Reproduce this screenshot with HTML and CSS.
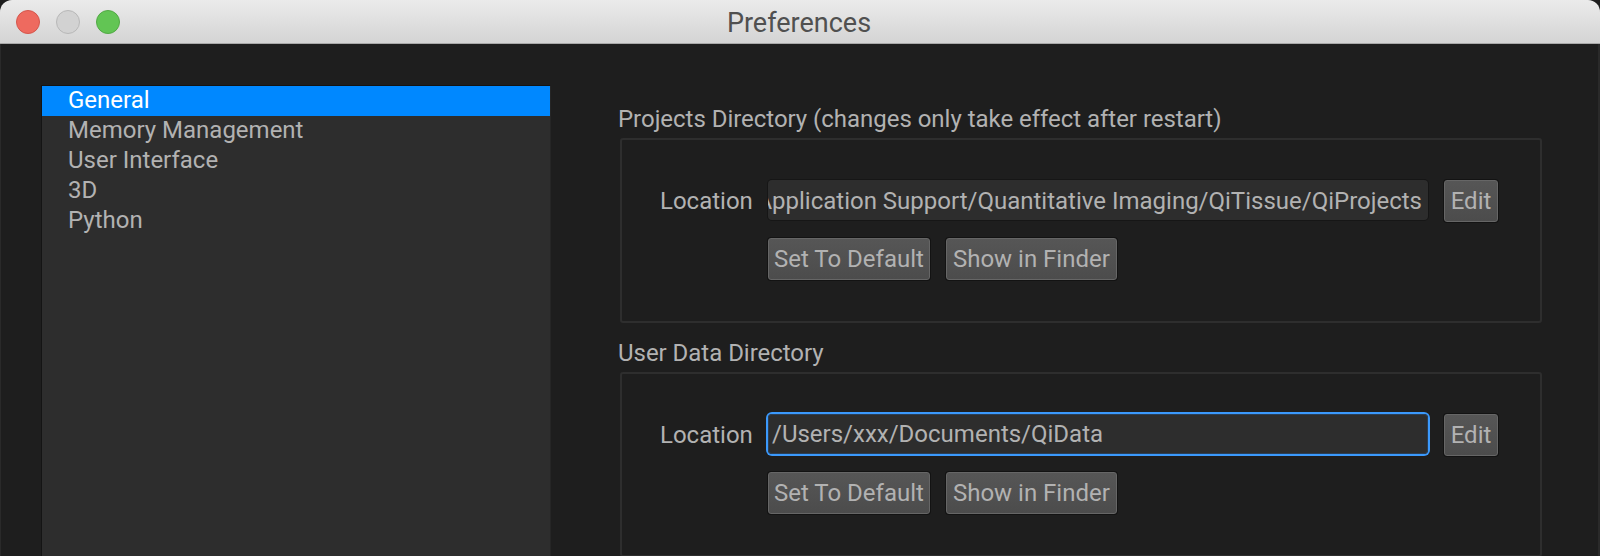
FILE: index.html
```html
<!DOCTYPE html>
<html lang="en">
<head>
<meta charset="utf-8">
<title>Preferences</title>
<link rel="stylesheet" href="styles.css">
</head>
<body>
<div class="window">
  <header class="titlebar">
    <div class="lights">
      <span class="light close"></span>
      <span class="light min"></span>
      <span class="light max"></span>
    </div>
    <div class="title">Preferences</div>
  </header>
  <main class="content">
    <ul class="sidebar">
      <li class="item selected">General</li>
      <li class="item">Memory Management</li>
      <li class="item">User Interface</li>
      <li class="item">3D</li>
      <li class="item">Python</li>
    </ul>
    <div class="panel">
      <section class="section">
        <h2 class="heading">Projects Directory (changes only take effect after restart)</h2>
        <div class="group">
          <div class="row">
            <span class="label">Location</span>
            <div class="field"><span class="clip">Application Support/Quantitative Imaging/QiTissue/QiProjects</span></div>
            <button class="btn edit">Edit</button>
          </div>
          <div class="actions">
            <button class="btn">Set To Default</button>
            <button class="btn finder">Show in Finder</button>
          </div>
        </div>
      </section>
      <section class="section">
        <h2 class="heading">User Data Directory</h2>
        <div class="group">
          <div class="row">
            <span class="label">Location</span>
            <div class="field focus"><span class="value">/Users/xxx/Documents/QiData</span></div>
            <button class="btn edit">Edit</button>
          </div>
          <div class="actions">
            <button class="btn">Set To Default</button>
            <button class="btn finder">Show in Finder</button>
          </div>
        </div>
      </section>
    </div>
  </main>
</div>
</body>
</html>
```

FILE: styles.css
```css
* { box-sizing: border-box; }
html, body { margin: 0; height: 100%; overflow: hidden; background: #1e1e1e; }
body { font-family: Roboto, "Liberation Sans", sans-serif; font-size: 24px; color: #b2b2b2; }
.window { height: 556px; display: flex; flex-direction: column; }
.titlebar {
  height: 44px; flex: none; position: relative; display: flex; align-items: center; justify-content: center;
  background: linear-gradient(#ebebeb, #d4d4d4);
  border-top-left-radius: 12px; border-top-right-radius: 12px;
  border-bottom: 1px solid #a9a9a9;
}
.lights { position: absolute; left: 16px; top: 10px; display: flex; gap: 16px; }
.light { width: 24px; height: 24px; border-radius: 50%; border: 1px solid; }
.close { background: #ee6a5f; border-color: #d5564c; }
.min { background: #d2d2d2; border-color: #b8b8b8; }
.max { background: #62c554; border-color: #52a945; }
.title { font-size: 27px; color: #505050; line-height: 1; padding: 3px 2px 0 0; }
.content { flex: 1; min-height: 0; display: flex; padding: 41px 0 0 40px; border-left: 1px solid #2a2a2a; border-right: 2px solid #2a2a2a; }
.sidebar {
  list-style: none; margin: 0; padding: 0; width: 510px; flex: none; height: 480px;
  background: #2d2d2d; border-left: 1px solid #141414; border-top: 1px solid #141414; border-right: 1px solid #262626;
}
.item { height: 30px; line-height: 29px; padding-left: 26px; }
.item.selected { background: #0088ff; color: #fff; }
.panel { flex: 1; min-width: 0; padding: 19px 56px 0 67px; }
.section { display: flex; flex-direction: column; }
.heading { margin: 0; font-size: 24px; font-weight: 400; line-height: 30px; letter-spacing: -0.03px; }
.group {
  margin: 4px 0 15px 2px; height: 185px; border: 2px solid #2e2e2e; border-radius: 3px;
  padding: 40px 0 0 38px;
}
.row { display: flex; align-items: flex-start; height: 42px; }
.label { width: 108px; flex: none; white-space: nowrap; line-height: 42px; }
.field {
  width: 660px; height: 40px; flex: none; background: #2d2d2d; border-radius: 4px;
  box-shadow: 0 0 0 1px #161616; overflow: hidden; display: flex; align-items: center; justify-content: flex-end;
  padding: 1px 6px 0; white-space: nowrap;
}
.clip { flex: none; }
.field.focus {
  justify-content: flex-start; padding: 0 4px;
  box-shadow: 0 0 0 2px #3b99fc, inset 0 0 0 1px #2b3f55;
}
.btn {
  font: inherit; color: #b2b2b2; height: 42px; padding: 0 5px; background: linear-gradient(#565656, #4c4c4c);
  border: 1px solid #666; border-radius: 3px; box-shadow: 0 0 0 1px #131313; white-space: nowrap;
}
.finder { padding: 0 6px; }
.edit { margin-left: 16px; width: 54px; padding: 0; }
.actions { display: flex; gap: 16px; margin: 16px 0 0 108px; }
```
